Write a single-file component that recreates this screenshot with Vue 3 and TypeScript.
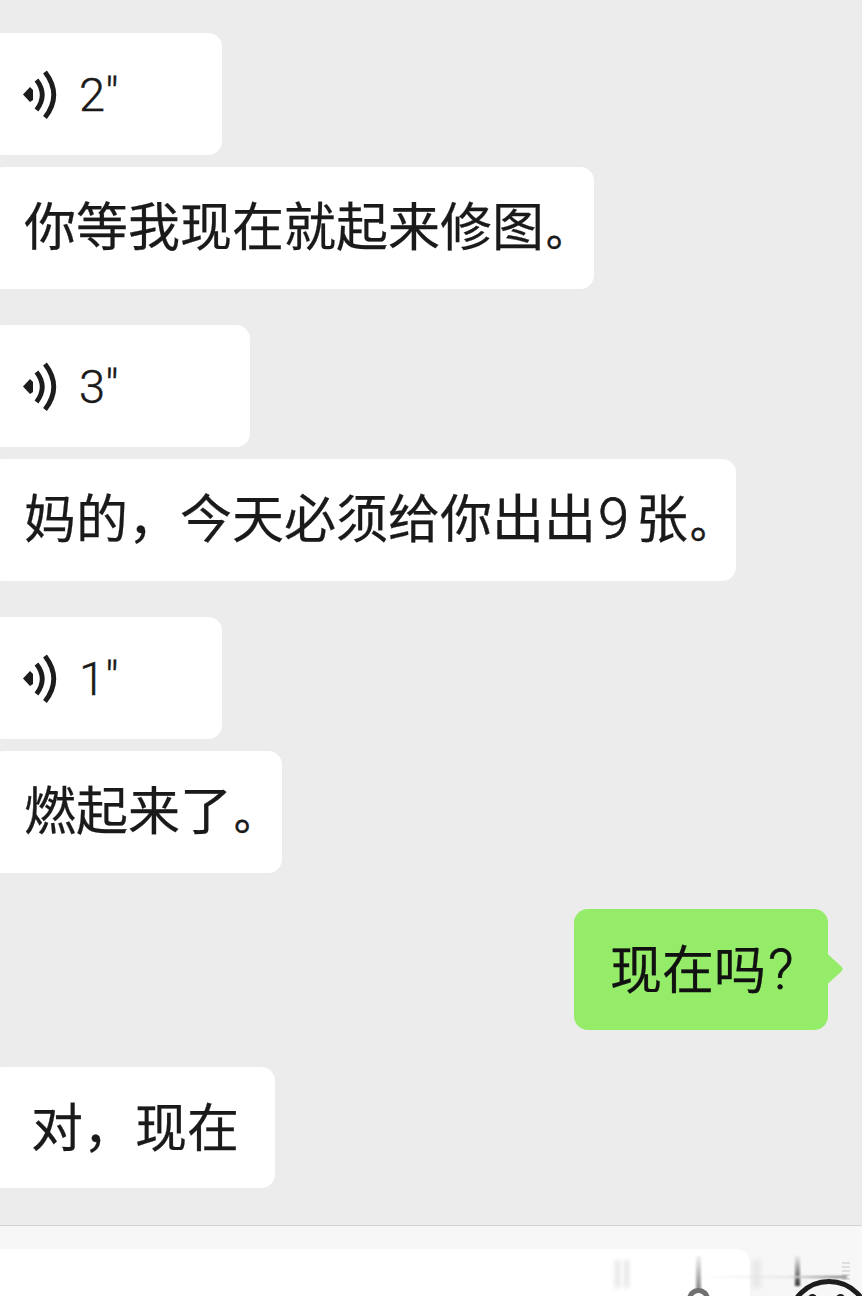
<script setup lang="ts">
interface Msg {
  kind: 'voice' | 'text' | 'me'
  text: string
  gap: number
  width: number
  lift: number
  latin?: string
  after?: string
  stop?: boolean
  padLeft?: number
  height?: number
}
const messages: Msg[] = [
  { kind: 'voice', text: '2', gap: 33, width: 232, lift: 0 },
  { kind: 'text', text: '你等我现在就起来修图', stop: true, gap: 12, width: 604, lift: 10 },
  { kind: 'voice', text: '3', gap: 36, width: 260, lift: 0 },
  { kind: 'text', text: '妈的，今天必须给你出出', latin: '9', after: '张', stop: true, gap: 12, width: 746, lift: 10 },
  { kind: 'voice', text: '1', gap: 36, width: 232, lift: 0 },
  { kind: 'text', text: '燃起来了', stop: true, gap: 12, width: 292, lift: 10 },
  { kind: 'me', text: '现在吗', latin: '?', gap: 36, width: 254, lift: 6, height: 121 },
  { kind: 'text', text: '对，现在', gap: 37, width: 285, lift: 6, padLeft: 41, height: 121 },
]
</script>

<template>
  <div class="page">
    <main class="chat">
      <div
        v-for="(m, i) in messages"
        :key="i"
        class="row"
        :class="{ mine: m.kind === 'me' }"
        :style="{ marginTop: m.gap + 'px' }"
      >
        <div
          class="bubble"
          :class="m.kind"
          :style="{
            width: m.width + 'px',
            height: (m.height ?? 122) + 'px',
            paddingLeft: m.padLeft ? m.padLeft + 'px' : undefined,
            paddingBottom: m.lift + 'px',
          }"
        >
          <template v-if="m.kind === 'voice'">
            <svg class="wave" width="40" height="50" viewBox="0 0 40 50" fill="none" stroke="#1c1c1c" stroke-width="4.8">
              <path d="M5 25.5 L12 18 L15 21 L15 31 L12 33 Z" fill="#1c1c1c" stroke="none" />
              <path d="M18.5 11 Q30 26 18.5 41" />
              <path d="M27 3 Q44.5 26 27 48.5" />
            </svg>
            <span class="secs">{{ m.text }}"</span>
          </template>
          <span v-else class="txt">{{ m.text }}<span v-if="m.latin" class="lat">{{ m.latin }}</span>{{ m.after }}<span v-if="m.stop" class="stop">。</span></span>
          <span v-if="m.kind === 'me'" class="tail"></span>
        </div>
      </div>
    </main>
    <footer class="bar">
      <div class="input"></div>
      <span class="smear s1"></span>
      <span class="smear s2"></span>
      <span class="smear s3"></span>
      <span class="smear s4"></span>
      <span class="smear s5"></span>
      <span class="smear s6"></span>
      <span class="streak"></span>
      <span class="ring"></span>
      <div class="face"><i></i><i></i></div>
    </footer>
  </div>
</template>

<style scoped>
.page {
  width: 862px;
  height: 1296px;
  overflow: hidden;
  background: #ececec;
  font-family: "Noto Sans CJK SC", "Liberation Sans", sans-serif;
  color: #1a1a1a;
  display: flex;
  flex-direction: column;
}
.chat { height: 1225px; flex: none; overflow: hidden; }
.row { display: flex; margin-left: -10px; }
.row.mine { justify-content: flex-end; margin-left: 0; padding-right: 34px; }
.bubble {
  box-sizing: border-box;
  background: #fff;
  border-radius: 14px;
  padding-left: 34px;
  display: flex;
  align-items: center;
  font-size: 52px;
  white-space: nowrap;
  position: relative;
}
.bubble.voice { padding-left: 28px; }
.bubble.me { background: #95ec69; padding-left: 36px; color: #111; }
.txt { -webkit-text-stroke: 0.25px currentColor; }
.lat {
  font-family: Roboto, "Liberation Sans", sans-serif;
  font-weight: 300;
  font-size: 56px;
  margin: 0 7px 0 2px;
  -webkit-text-stroke: 0.8px currentColor;
}
.me .lat { margin: 0 0 0 2px; }
.stop { font-size: 42px; margin-left: 2px; -webkit-text-stroke: 0.6px currentColor; }
.wave { flex: none; }
.secs {
  font-family: Roboto, "Liberation Sans", sans-serif;
  font-weight: 300;
  font-size: 47px;
  margin-left: 21px;
  -webkit-text-stroke: 0.4px currentColor;
}
.tail {
  position: absolute;
  right: -15px;
  top: 45px;
  width: 22px;
  height: 30px;
  background: #95ec69;
  clip-path: polygon(30% 0, 90% 40%, 100% 50%, 90% 60%, 30% 100%);
}
.bar {
  flex: 1;
  position: relative;
  background: #f7f7f7;
  border-top: 1px solid #d2d2d2;
  overflow: hidden;
}
.input {
  margin-top: 23px;
  width: 750px;
  height: 60px;
  background: #fff;
  border-radius: 0 14px 0 0;
}
.smear {
  position: absolute;
  top: 34px;
  height: 28px;
  filter: blur(2px);
}
.s1 { left: 615px; width: 5px; background: #e6e6e6; }
.s2 { left: 624px; width: 5px; background: #e6e6e6; }
.s3 { left: 696px; top: 30px; height: 34px; width: 5px; background: linear-gradient(#f2f2f2, #8a8a8a); filter: blur(1px); }
.s4 { left: 752px; width: 9px; background: #e8e8e8; }
.s5 { left: 795px; top: 30px; height: 30px; width: 5px; background: linear-gradient(#eeeeee, #333); filter: blur(1px); }
.s6 { left: 842px; top: 36px; height: 18px; width: 8px; background: repeating-linear-gradient(#dedede 0 2px, #f7f7f7 2px 4px); filter: none; }
.streak {
  position: absolute;
  left: 700px;
  top: 50px;
  width: 147px;
  height: 2px;
  background: linear-gradient(90deg, #f7f7f700, #e4e4e4 60%, #666);
  filter: blur(1px);
}
.ring {
  position: absolute;
  left: 687px;
  top: 62px;
  width: 23px;
  height: 23px;
  box-sizing: border-box;
  border: 5px solid #707070;
  border-radius: 50%;
}
.face {
  position: absolute;
  left: 787px;
  top: 53px;
  width: 84px;
  height: 84px;
  box-sizing: border-box;
  border: 5px solid #1d1d1d;
  border-radius: 50%;
}
.face i {
  position: absolute;
  top: 10px;
  width: 9px;
  height: 9px;
  border-radius: 50%;
  background: #1d1d1d;
}
.face i:first-child { left: 16px; }
.face i:last-child { left: 44px; }
</style>
